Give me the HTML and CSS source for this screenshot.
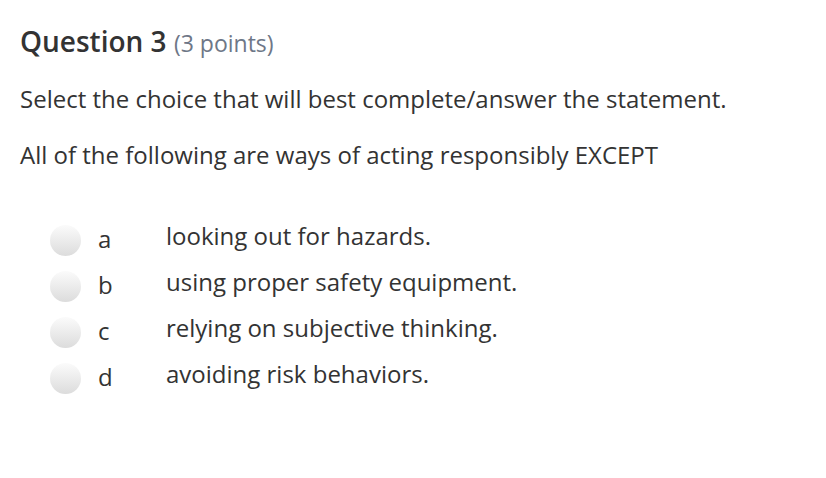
FILE: index.html
```html
<!DOCTYPE html>
<html>
<head>
<meta charset="utf-8">
<link rel="stylesheet" href="styles.css">
</head>
<body>
<div class="question">
  <h2 class="title">Question 3 <span class="points">(3 points)</span></h2>
  <p class="text">Select the choice that will best complete/answer the statement.</p>
  <p class="text">All of the following are ways of acting responsibly EXCEPT</p>
  <ul class="options">
    <li class="option"><span class="radio"></span><span class="letter">a</span><span class="answer">looking out for hazards.</span></li>
    <li class="option"><span class="radio"></span><span class="letter">b</span><span class="answer">using proper safety equipment.</span></li>
    <li class="option"><span class="radio"></span><span class="letter">c</span><span class="answer">relying on subjective thinking.</span></li>
    <li class="option"><span class="radio"></span><span class="letter">d</span><span class="answer">avoiding risk behaviors.</span></li>
  </ul>
</div>
</body>
</html>
```
FILE: styles.css
```css
html, body {
  margin: 0;
  padding: 0;
  background: #ffffff;
}
body {
  font-family: "Open Sans", "Liberation Sans", sans-serif;
  color: #333333;
}
.question {
  padding: 20px 20px 0 20px;
}
.title {
  margin: 0;
  font-size: 28px;
  font-weight: 600;
  line-height: 42px;
  color: #333333;
}
.points {
  font-size: 23px;
  font-weight: 400;
  color: #6e7787;
}
.text {
  margin: 14px 0 0 0;
  font-size: 24px;
  line-height: 42px;
}
.text + .text {
  margin-top: 14px;
}
.options {
  list-style: none;
  margin: 41px 0 0 0;
  padding: 0 0 0 30px;
}
.option {
  display: flex;
  align-items: center;
  height: 46px;
  font-size: 24px;
  line-height: 30px;
}
.radio {
  width: 31px;
  height: 31px;
  border-radius: 50%;
  background: linear-gradient(#fbfbfb, #dcdcdc);
  flex: none;
}
.letter {
  width: 85px;
  padding-left: 17px;
  padding-bottom: 2px;
  box-sizing: border-box;
  flex: none;
}
.answer {
  flex: 1;
  padding-bottom: 9px;
}
```
